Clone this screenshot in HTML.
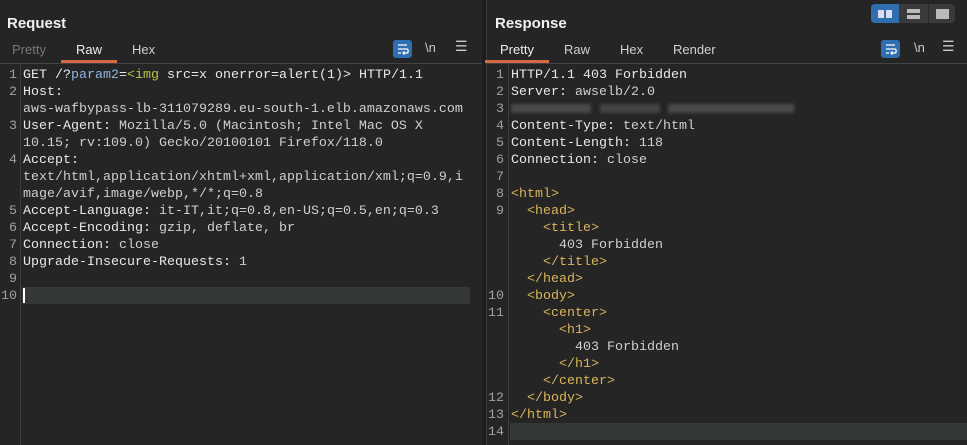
<!DOCTYPE html>
<html><head><meta charset="utf-8"><style>
*{margin:0;padding:0;box-sizing:border-box}
body{width:967px;height:445px;background:#252525;overflow:hidden;position:relative;font-family:"Liberation Sans",sans-serif;color:#ddd}
.abs{position:absolute}
.title{font-weight:bold;font-size:15px;color:#f0f0f0;top:15px}
.tab{font-size:13px;top:42px;color:#d0d0d0}
.ul{height:3px;background:#d46a45;top:60px}
.hl{height:1px;background:#444;top:63px}
.code{font-family:"Liberation Mono",monospace;font-size:13.33px;line-height:17px;white-space:pre}
.ln{color:#a0a0a0;text-align:right}
.k{color:#e8e8e8}.v{color:#cfcfcf}.t{color:#dbb45a}.b{color:#8fb4e0}.g{color:#b8c24a}
.blur{background:#4a4a4a;height:9px;top:104px;filter:blur(1.5px)}
</style></head><body>
<div class="abs" style="left:482px;top:0;width:4px;height:445px;background:#1c1c1c"></div>
<div class="abs" style="left:486px;top:0;width:1px;height:445px;background:#3a3a3a"></div>
<div class="abs title" style="left:7px">Request</div>
<div class="abs tab" style="left:12px;color:#777">Pretty</div>
<div class="abs tab" style="left:76px;color:#eee">Raw</div>
<div class="abs tab" style="left:132px">Hex</div>
<div class="abs ul" style="left:61px;width:56px"></div>
<div class="abs hl" style="left:0;width:482px"></div>
<div class="abs" style="left:393px;top:40px;width:19px;height:18px;background:#2f6eb0;border-radius:3px"></div>
<svg class="abs" style="left:395px;top:42px" width="15" height="14"><path d="M3 3H12M3 7H12C13.5 7 13.5 11 12 11H8M9.5 9.5L8 11L9.5 12.5M3 11H6" stroke="#fff" stroke-width="1.3" fill="none"/></svg>
<div class="abs" style="left:425px;top:40px;font-size:13px;color:#ccc">\n</div>
<div class="abs" style="left:455px;top:38px;font-size:14px;color:#ccc">☰</div>
<div class="abs" style="left:871px;top:4px;width:84px;height:19px;background:#3a3a3a;border-radius:4px"></div>
<div class="abs" style="left:871px;top:4px;width:28px;height:19px;background:#2f6eb0;border-radius:4px 0 0 4px"></div>
<div class="abs" style="left:928px;top:4px;width:1px;height:19px;background:#2a2a2a"></div>
<div class="abs" style="left:878px;top:10px;width:6px;height:8px;background:#dde"></div>
<div class="abs" style="left:886px;top:10px;width:6px;height:8px;background:#dde"></div>
<div class="abs" style="left:907px;top:9px;width:13px;height:4px;background:#bbb"></div>
<div class="abs" style="left:907px;top:15px;width:13px;height:4px;background:#bbb"></div>
<div class="abs" style="left:936px;top:9px;width:13px;height:10px;background:#bbb"></div>
<div class="abs title" style="left:495px">Response</div>
<div class="abs tab" style="left:500px;color:#eee">Pretty</div>
<div class="abs tab" style="left:564px">Raw</div>
<div class="abs tab" style="left:620px">Hex</div>
<div class="abs tab" style="left:673px">Render</div>
<div class="abs ul" style="left:485px;width:64px"></div>
<div class="abs hl" style="left:487px;width:480px"></div>
<div class="abs" style="left:881px;top:40px;width:19px;height:18px;background:#2f6eb0;border-radius:3px"></div>
<svg class="abs" style="left:883px;top:42px" width="15" height="14"><path d="M3 3H12M3 7H12C13.5 7 13.5 11 12 11H8M9.5 9.5L8 11L9.5 12.5M3 11H6" stroke="#fff" stroke-width="1.3" fill="none"/></svg>
<div class="abs" style="left:914px;top:40px;font-size:13px;color:#ccc">\n</div>
<div class="abs" style="left:942px;top:38px;font-size:14px;color:#ccc">☰</div>
<div class="abs" style="left:20px;top:64px;width:1px;height:381px;background:#3d3d3d"></div>
<div class="abs" style="left:508px;top:64px;width:1px;height:381px;background:#3d3d3d"></div>
<div class="abs" style="left:22px;top:287px;width:448px;height:17px;background:#353839"></div>
<div class="abs" style="left:23px;top:288px;width:2px;height:15px;background:#fff"></div>
<div class="abs" style="left:510px;top:423px;width:457px;height:17px;background:#353839"></div>
<div class="abs code ln" style="left:0;top:67px;width:17px">1
2

3

4


5
6
7
8
9
10</div>
<div class="abs code" style="left:23px;top:67px"><span class="k">GET /?<span class="b">param2</span>=<span class="g">&lt;img</span> src=x onerror=alert(1)&gt; HTTP/1.1</span>
<span class="k">Host:</span>
<span class="v">aws-wafbypass-lb-311079289.eu-south-1.elb.amazonaws.com</span>
<span class="k">User-Agent:</span><span class="v"> Mozilla/5.0 (Macintosh; Intel Mac OS X</span>
<span class="v">10.15; rv:109.0) Gecko/20100101 Firefox/118.0</span>
<span class="k">Accept:</span>
<span class="v">text/html,application/xhtml+xml,application/xml;q=0.9,i</span>
<span class="v">mage/avif,image/webp,*/*;q=0.8</span>
<span class="k">Accept-Language:</span><span class="v"> it-IT,it;q=0.8,en-US;q=0.5,en;q=0.3</span>
<span class="k">Accept-Encoding:</span><span class="v"> gzip, deflate, br</span>
<span class="k">Connection:</span><span class="v"> close</span>
<span class="k">Upgrade-Insecure-Requests:</span><span class="v"> 1</span></div>
<div class="abs code ln" style="left:486px;top:67px;width:18px">1
2
3
4
5
6
7
8
9




10
11




12
13
14</div>
<div class="abs blur" style="left:511px;width:80px"></div>
<div class="abs blur" style="left:600px;width:60px;background:#444"></div>
<div class="abs blur" style="left:668px;width:126px"></div>
<div class="abs code" style="left:511px;top:67px"><span class="k">HTTP/1.1 403 Forbidden</span>
<span class="k">Server:</span><span class="v"> awselb/2.0</span>

<span class="k">Content-Type:</span><span class="v"> text/html</span>
<span class="k">Content-Length:</span><span class="v"> 118</span>
<span class="k">Connection:</span><span class="v"> close</span>

<span class="t">&lt;html&gt;</span>
  <span class="t">&lt;head&gt;</span>
    <span class="t">&lt;title&gt;</span>
      <span class="v">403 Forbidden</span>
    <span class="t">&lt;/title&gt;</span>
  <span class="t">&lt;/head&gt;</span>
  <span class="t">&lt;body&gt;</span>
    <span class="t">&lt;center&gt;</span>
      <span class="t">&lt;h1&gt;</span>
        <span class="v">403 Forbidden</span>
      <span class="t">&lt;/h1&gt;</span>
    <span class="t">&lt;/center&gt;</span>
  <span class="t">&lt;/body&gt;</span>
<span class="t">&lt;/html&gt;</span></div>
</body></html>
